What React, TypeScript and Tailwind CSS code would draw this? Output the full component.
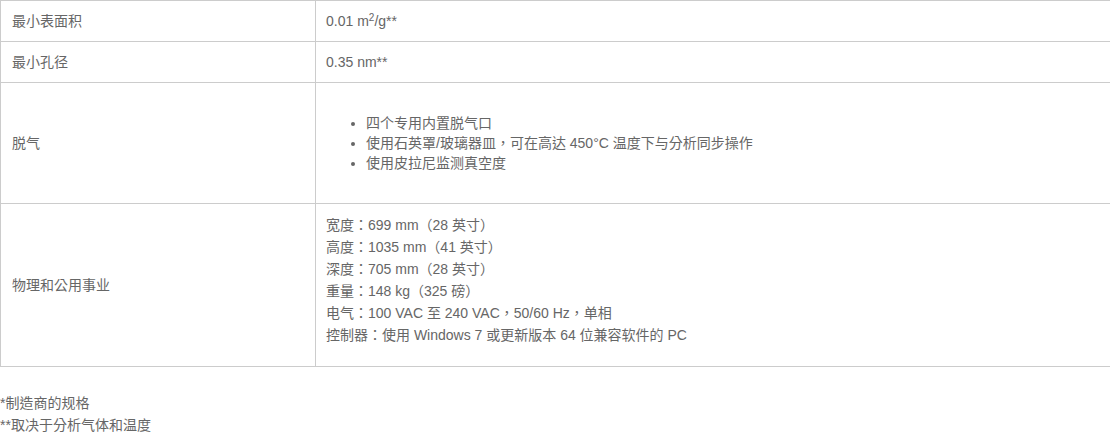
const rows = [
  { label: '最小表面积', h: 'h-[41px]' },
  { label: '最小孔径', h: 'h-[41px]' },
]

const degas = ['四个专用内置脱气口', '使用石英罩/玻璃器皿，可在高达 450°C 温度下与分析同步操作', '使用皮拉尼监测真空度']

const physical = [
  '宽度：699 mm（28 英寸）',
  '高度：1035 mm（41 英寸）',
  '深度：705 mm（28 英寸）',
  '重量：148 kg（325 磅）',
  '电气：100 VAC 至 240 VAC，50/60 Hz，单相',
  '控制器：使用 Windows 7 或更新版本 64 位兼容软件的 PC',
]

export default function App() {
  return (
    <div
      className="w-[1110px] h-[447px] overflow-hidden bg-white text-[14px] text-[#666]"
      style={{ fontFamily: '"Liberation Sans", "Noto Sans CJK TC", "Noto Sans CJK SC", sans-serif' }}
    >
      <table className="w-[1120px] border-collapse">
        <tbody>
          <tr className={rows[0].h}>
            <td className="w-[315px] border border-[#ccc] px-[11px] align-middle">{rows[0].label}</td>
            <td className="border border-[#ccc] px-[10px] align-middle">
              0.01 m<sup className="text-[10px]">2</sup>/g**
            </td>
          </tr>
          <tr className={rows[1].h}>
            <td className="border border-[#ccc] px-[11px] align-middle">{rows[1].label}</td>
            <td className="border border-[#ccc] px-[10px] align-middle">0.35 nm**</td>
          </tr>
          <tr className="h-[121px]">
            <td className="border border-[#ccc] px-[11px] align-middle">脱气</td>
            <td className="border border-[#ccc] px-[10px] align-middle">
              <ul className="list-disc pl-[40px] leading-[20px]">
                {degas.map((d) => (
                  <li key={d}>{d}</li>
                ))}
              </ul>
            </td>
          </tr>
          <tr className="h-[163px]">
            <td className="border border-[#ccc] px-[11px] align-middle">物理和公用事业</td>
            <td className="border border-[#ccc] px-[10px] pt-[10px] pb-[20px] align-top leading-[22px]">
              {physical.map((p) => (
                <div key={p}>{p}</div>
              ))}
            </td>
          </tr>
        </tbody>
      </table>
      <div className="mt-[25px] leading-[22px]">
        <div>*制造商的规格</div>
        <div>**取决于分析气体和温度</div>
      </div>
    </div>
  )
}
